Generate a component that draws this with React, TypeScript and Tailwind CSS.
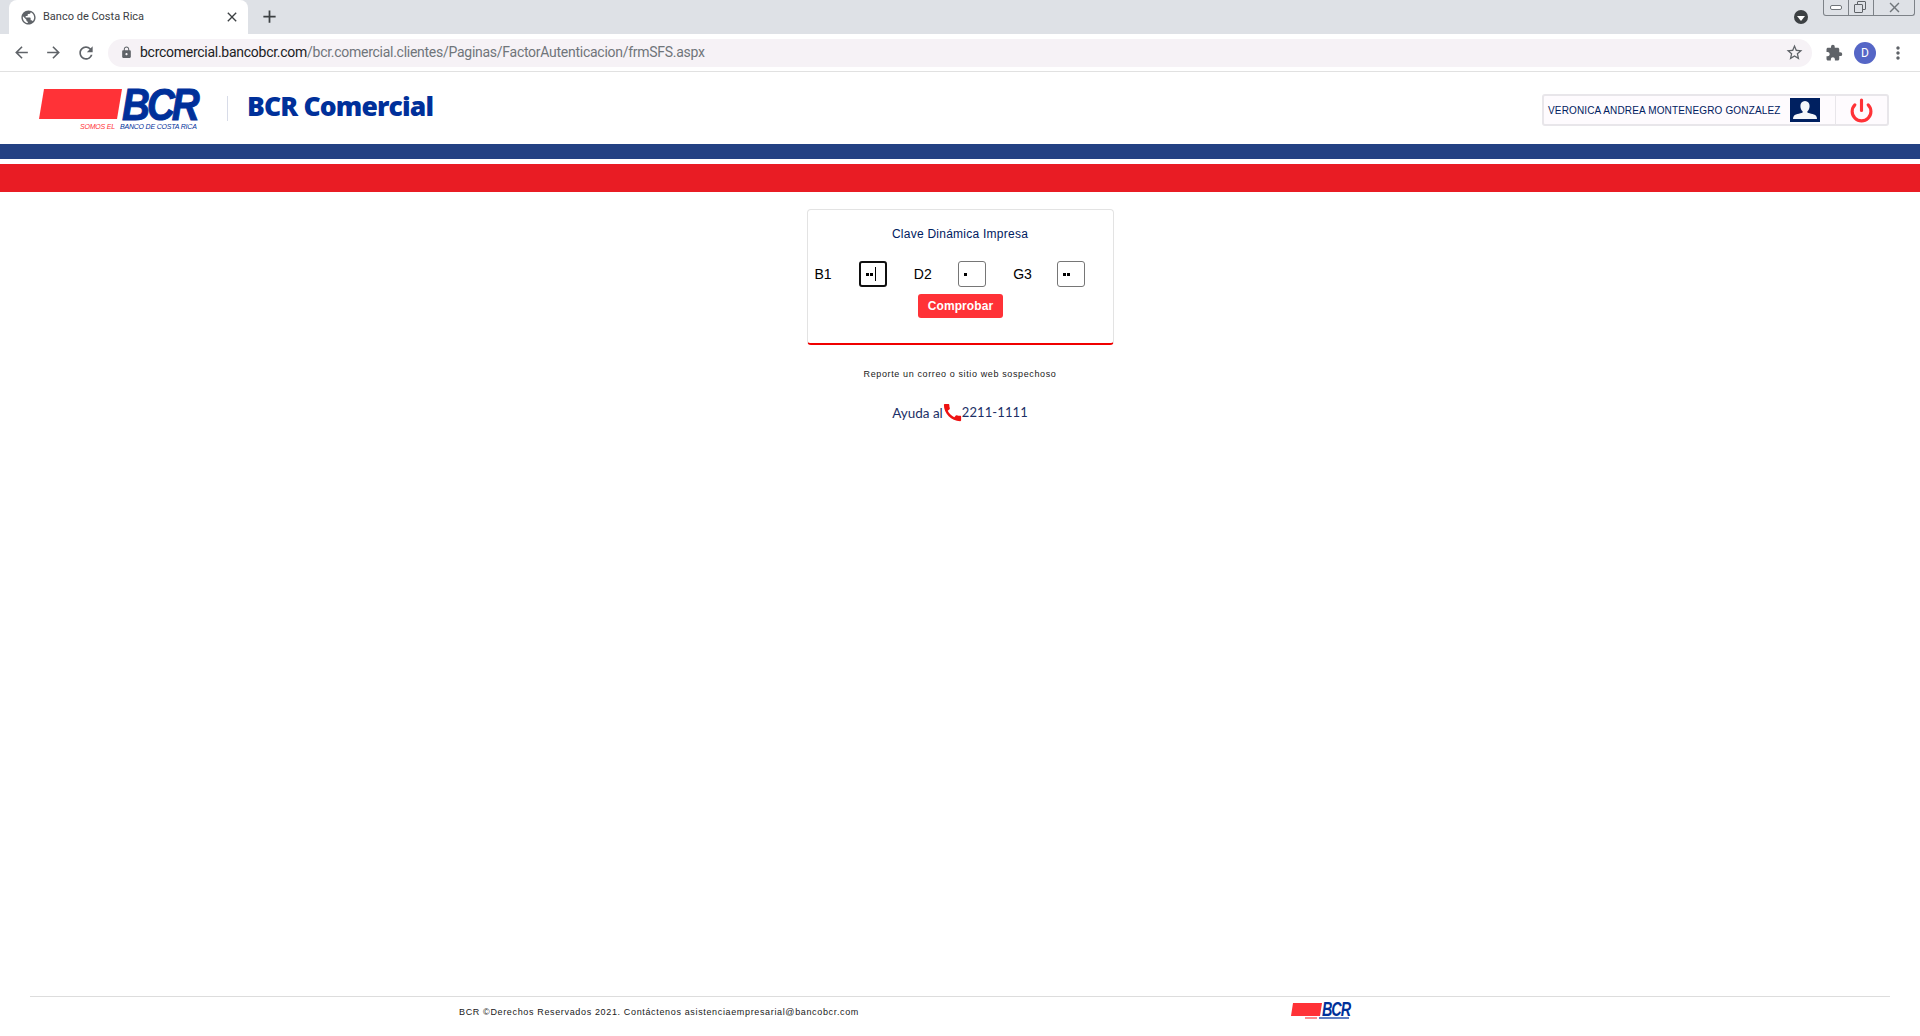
import React from "react";
import {
  MdAdd,
  MdArrowBack,
  MdArrowForward,
  MdCall,
  MdClose,
  MdExtension,
  MdLock,
  MdMoreVert,
  MdPublic,
  MdRefresh,
  MdStarBorder,
} from "react-icons/md";
import { Power } from "lucide-react";

const fields = [
  { label: "B1", dots: 2, active: true },
  { label: "D2", dots: 1, active: false },
  { label: "G3", dots: 2, active: false },
];

const BrowserChrome = () => (
  <div className="shrink-0 font-['Roboto',sans-serif]">
    {/* Tab strip */}
    <div className="relative flex h-[34px] items-end bg-[#dee1e6]">
      <div className="ml-[9px] flex h-[34px] w-[239px] items-center rounded-t-lg bg-white pl-[11px] pr-[8px]">
        <MdPublic className="text-[17px] text-[#5f6368]" />
        <span className="ml-[6px] flex-1 text-[11px] text-[#3c4043]">Banco de Costa Rica</span>
        <MdClose className="text-[16px] text-[#3c4043]" />
      </div>
      <MdAdd className="ml-[11px] mb-[7px] text-[21px] text-[#3c4043]" />

      <div className="ml-auto mb-[10px] mr-[112px] flex h-[14px] w-[14px] items-center justify-center rounded-full bg-[#3c4043]">
        <span className="mt-[2px] border-x-[4px] border-t-[5px] border-x-transparent border-t-white" />
      </div>
      {/* Windows caption buttons */}
      <div className="absolute right-[5px] top-0 flex h-[16px] w-[92px] rounded-b-[3px] border border-t-0 border-[#7d8288] bg-[#dee1e6]">
        <div className="flex w-[25px] items-center justify-center border-r border-[#7d8288]">
          <span className="h-[5px] w-[12px] rounded-[2px] border border-[#70757a] bg-white" />
        </div>
        <div className="relative w-[25px] border-r border-[#7d8288]">
          <span className="absolute left-[8px] top-[1px] h-[9px] w-[9px] rounded-[1px] border border-[#5f6368]" />
          <span className="absolute left-[5px] top-[4px] h-[9px] w-[9px] rounded-[1px] border border-[#5f6368] bg-[#dee1e6]" />
        </div>
        <div className="flex flex-1 items-center justify-center">
          <MdClose className="text-[17px] text-[#70757a]" />
        </div>
      </div>
    </div>

    {/* Toolbar */}
    <div className="flex h-[38px] items-center border-b border-[#e1e1e1] bg-white">
      <MdArrowBack className="ml-[12px] text-[19px] text-[#5f6368]" />
      <MdArrowForward className="ml-[13px] text-[19px] text-[#5f6368]" />
      <MdRefresh className="ml-[13px] text-[20px] text-[#5f6368]" />
      <div className="ml-[12px] flex h-[28px] w-[1704px] items-center rounded-full bg-[#f6f2f6] pl-[12px] pr-[8px]">
        <MdLock className="text-[13px] text-[#5f6368]" />
        <span className="ml-[7px] flex-1 text-[14px] tracking-[-0.27px] text-[#202124]">
          bcrcomercial.bancobcr.com
          <span className="text-[#70757a]">/bcr.comercial.clientes/Paginas/FactorAutenticacion/frmSFS.aspx</span>
        </span>
        <MdStarBorder className="text-[19px] text-[#5f6368]" />
      </div>
      <MdExtension className="ml-[13px] text-[18px] text-[#5f6368]" />
      <div className="ml-[11px] flex h-[22px] w-[22px] items-center justify-center rounded-full bg-[#5566c6] text-[12px] text-white">
        D
      </div>
      <MdMoreVert className="ml-[12px] text-[20px] text-[#5f6368]" />
    </div>
  </div>
);

const Logo = () => (
  <div className="flex w-[160px] flex-col">
    <div className="flex h-[31px] items-center">
      <svg width="85" height="31" viewBox="0 0 85 31" className="shrink-0">
        <polygon points="5,0 83,0 78,30 0,30" fill="#ff3237" />
      </svg>
      <span className="-ml-[2px] origin-left scale-x-[0.88] text-[44px] font-bold italic leading-[31px] tracking-[-3.5px] text-[#00309a] [-webkit-text-stroke:1px_#00309a] font-['Liberation_Sans',sans-serif]">
        BCR
      </span>
    </div>
    <div className="ml-[41px] mt-[2px] flex whitespace-nowrap text-[7px] italic leading-[10px] tracking-[-0.2px] font-['Liberation_Sans',sans-serif]">
      <span className="text-[#ff3237]">SOMOS EL</span>
      <span className="ml-[5px] text-[#00309a]">BANCO DE COSTA RICA</span>
    </div>
  </div>
);

const SmallLogo = () => (
  <div className="flex w-[60px] flex-col">
    <div className="flex h-[14px] items-center">
      <svg width="31" height="13" viewBox="0 0 31 13" className="shrink-0">
        <polygon points="2,0 31,0 29,13 0,13" fill="#ff3237" />
      </svg>
      <span className="origin-left scale-x-[0.72] text-[20px] font-bold italic leading-none tracking-[-1.5px] text-[#00309a] font-['Liberation_Sans',sans-serif]">
        BCR
      </span>
    </div>
    <div className="ml-[14px] mt-[1px] flex h-[2px] gap-[2px]">
      <span className="w-[12px] bg-[#ff8a8d]" />
      <span className="w-[30px] bg-[#5f7fc4]" />
    </div>
  </div>
);

const SiteHeader = () => (
  <header className="flex h-[72px] shrink-0 items-center justify-between bg-white pl-[39px] pr-[31px]">
    <div className="flex items-center">
      <div className="pb-[2px] pt-[6px]">
        <Logo />
      </div>
      <div className="ml-[28px] h-[25px] w-px bg-[#d8dce8]" />
      <span className="ml-[19px] mb-[3px] text-[26.5px] font-extrabold leading-none tracking-[-0.85px] text-[#00309a] font-['Open_Sans',sans-serif]">
        BCR Comercial
      </span>
    </div>

    <div className="mt-[4px] flex h-[32px] w-[347px] items-center rounded-[3px] border-2 border-[#e8e6ea] bg-[#fefbfe] pl-[4px]">
      <span className="w-[242px] whitespace-nowrap text-[10px] tracking-[0.15px] text-[#002060] font-['Liberation_Sans',sans-serif]">
        VERONICA ANDREA MONTENEGRO GONZALEZ
      </span>
      <div className="flex h-[24px] w-[30px] items-center justify-center bg-[#002060]">
        <svg width="26" height="22" viewBox="0 0 26 22" fill="#f4f6fa">
          <path d="M13 2c3 0 4.600 2.200 4.600 5 0 2.200-1 4.400-2.200 5.300v1.300c0 .7 7 1.400 8.600 3.200 .7.800 1 1.900 1 3.200H1c0-1.300.3-2.400 1-3.200 1.600-1.800 8.600-2.500 8.600-3.200v-1.300C9.400 11.400 8.400 9.200 8.400 7c0-2.800 1.600-5 4.600-5z" />
        </svg>
      </div>
      <div className="ml-[15px] h-[28px] w-px bg-[#e8e6ea]" />
      <div className="flex flex-1 items-center justify-center">
        <Power size={25} strokeWidth={3} className="text-[#ff3237]" />
      </div>
    </div>
  </header>
);

const CodeField = ({ label, dots, active }: { label: string; dots: number; active: boolean }) => (
  <div className="flex w-[100px] items-center">
    <span className="w-[44px] text-[14px] text-black">{label}</span>
    <div
      className={`flex h-[26px] w-[28px] items-center gap-[1px] rounded-[3px] bg-white pl-[5px] ${
        active ? "border-2 border-[#101010]" : "border border-[#767676]"
      }`}
    >
      {Array.from({ length: dots }).map((_, i) => (
        <span key={i} className="h-[3px] w-[3px] bg-black" />
      ))}
      {active && <span className="ml-[1px] h-[14px] w-px bg-black" />}
    </div>
  </div>
);

export default function App() {
  return (
    <div className="flex h-screen flex-col overflow-hidden bg-white font-['Liberation_Sans',sans-serif]">
      <BrowserChrome />
      <SiteHeader />

      {/* Colour bands */}
      <div className="h-[15px] shrink-0 bg-[#234183]" />
      <div className="mt-[5px] h-[28px] shrink-0 bg-[#e91c24]" />

      <main className="flex flex-1 flex-col items-center pt-[17px]">
        <div className="flex h-[136px] w-[307px] flex-col rounded-[4px] border border-b-2 border-[#e3e3e3] border-b-[#f00000] pl-[7px]">
          <p className="mt-[16px] -ml-[7px] text-center text-[12px] leading-[16px] tracking-[0.25px] text-[#002060]">
            Clave Dinámica Impresa
          </p>
          <div className="mt-[19px] flex">
            {fields.map((f) => (
              <CodeField key={f.label} label={f.label} dots={f.dots} active={f.active} />
            ))}
          </div>
          <button className="mx-auto mt-[7px] -translate-x-[3px] h-[24px] w-[85px] rounded-[3px] bg-[#ff3237] text-[12px] font-bold tracking-[0.1px] text-white">
            Comprobar
          </button>
        </div>

        <p className="mt-[23px] text-[9px] leading-[12px] tracking-[0.62px] text-[#202020]">
          Reporte un correo o sitio web sospechoso
        </p>

        <div className="mt-[21px] flex items-center text-[13.500px] text-[#1c2f66] font-['Lato',sans-serif]">
          <span>Ayuda al</span>
          <MdCall className="mb-[1px] text-[23px] -mx-[2px] text-[#ee1111]" />
          <span className="text-[13px] tracking-[0.1px]">2211-1111</span>
        </div>
      </main>

      <footer className="mx-[30px] flex h-[40px] shrink-0 items-start border-t border-[#dddddd] pl-[429px] pt-[5px]">
        <p className="mt-[4px] text-[9px] leading-[12px] tracking-[0.65px] text-[#202020]">
          BCR ©Derechos Reservados 2021. Contáctenos asistenciaempresarial@bancobcr.com
        </p>
        <div className="ml-[432px]">
          <SmallLogo />
        </div>
      </footer>
    </div>
  );
}
